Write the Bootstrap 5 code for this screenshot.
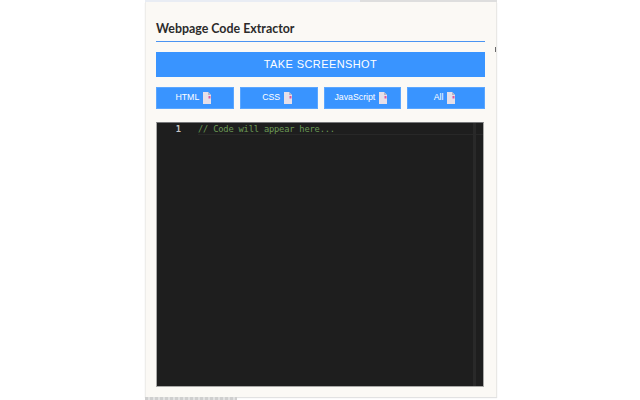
<!DOCTYPE html>
<html lang="en">
<head>
<meta charset="utf-8">
<title>Webpage Code Extractor</title>
<link href="https://cdn.jsdelivr.net/npm/bootstrap@5.3.0/dist/css/bootstrap.min.css" rel="stylesheet">
<style>
html, body { height: 100%; }
body { background: #fff; overflow: hidden; font-family: "Liberation Sans", Arial, sans-serif; }
.stage { width: 640px; height: 400px; }
.panel { width: 352px; height: 400px; margin-left: 145px; background: #fff; position: relative; }
.topbar { height: 2px; }
.topbar-a { width: 215px; background: #e9edf4; }
.topbar-b { flex: 1; background: #dedede; }
.sheet { height: 395px; padding: 18px 11px 0 10px; background: #fbf9f5; border-left: 1px solid #eeedea; border-right: 1px solid #e9e8e5; box-shadow: 0 1px 1px #e2e2e2; }
.ttl { font-family: Lato, sans-serif; font-weight: 700; font-size: 12.4px; line-height: 17px; color: #2b2b2b; margin: 0; padding-bottom: 3px; height: 22px; border-bottom: 1px solid #4a94f2; }
.btn-shot, .btn-code { background: #3994ff; color: #fff; border: 1px solid #3994ff; border-radius: 0; padding: 0; display: flex; align-items: center; justify-content: center; }
.btn-shot { height: 25px; margin-top: 10px; width: 100%; font-size: 11px; letter-spacing: .4px; }
.btn-row { margin-top: 10px; gap: 6px; }
.btn-code { flex: 1 1 0; height: 22px; font-size: 8.75px; gap: 4px; padding-right: 3px; border-color: #5aa6ff; }
.doc { width: 8px; height: 12px; flex: none; }
.editor { margin: 13px 0 0 0; height: 265px; width: 328px; background: #1e1e1e; border: 1px solid #a9a9a7; border-top-color: #77787a; display: flex; position: relative; font-family: "DejaVu Sans Mono", monospace; font-size: 8.75px; line-height: 12px; }
.gut { width: 24px; text-align: right; color: #c6c6c6; font-weight: 700; flex: none; }
.cline { flex: 1; margin-left: 17px; height: 12px; color: #6a9955; letter-spacing: -.2px; white-space: nowrap; border-bottom: 1px solid #282828; }
.rule { position: absolute; top: 0; bottom: 0; right: 7px; width: 3px; background: #292929; }
.strip { width: 92px; height: 3px; margin-top: 0; background: repeating-linear-gradient(90deg, #cfcfcf 0 3px, #e2e2e2 3px 5px); }
.tick { position: absolute; left: 350px; top: 47px; width: 1px; height: 5px; background: #6b6b6b; }
</style>
</head>
<body>
<div class="stage">
  <div class="panel">
    <div class="d-flex topbar"><div class="topbar-a"></div><div class="topbar-b"></div></div>
    <div class="sheet">
      <h1 class="ttl">Webpage Code Extractor</h1>
      <button type="button" class="btn btn-shot">TAKE SCREENSHOT</button>
      <div class="d-flex btn-row">
        <button type="button" class="btn btn-code">HTML <svg class="doc" viewBox="0 0 8 12"><path d="M0 0h5l3 3v9H0z" fill="#e6dfe8"/><path d="M5 0l3 3H5z" fill="#b9b4c4"/><rect x="5.5" y="4" width="2" height="2.5" fill="#d95aa5"/></svg></button>
        <button type="button" class="btn btn-code">CSS <svg class="doc" viewBox="0 0 8 12"><path d="M0 0h5l3 3v9H0z" fill="#e6dfe8"/><path d="M5 0l3 3H5z" fill="#b9b4c4"/><rect x="5.5" y="4" width="2" height="2.5" fill="#d95aa5"/></svg></button>
        <button type="button" class="btn btn-code">JavaScript <svg class="doc" viewBox="0 0 8 12"><path d="M0 0h5l3 3v9H0z" fill="#e6dfe8"/><path d="M5 0l3 3H5z" fill="#b9b4c4"/><rect x="5.5" y="4" width="2" height="2.5" fill="#d95aa5"/></svg></button>
        <button type="button" class="btn btn-code">All <svg class="doc" viewBox="0 0 8 12"><path d="M0 0h5l3 3v9H0z" fill="#e6dfe8"/><path d="M5 0l3 3H5z" fill="#b9b4c4"/><rect x="5.5" y="4" width="2" height="2.5" fill="#d95aa5"/></svg></button>
      </div>
      <div class="editor">
        <div class="gut">1</div>
        <div class="cline">// Code will appear here...</div>
        <div class="rule"></div>
      </div>
    </div>
    <div class="strip"></div>
    <div class="tick"></div>
  </div>
</div>
<script src="https://cdn.jsdelivr.net/npm/bootstrap@5.3.0/dist/js/bootstrap.bundle.min.js"></script>
</body>
</html>
